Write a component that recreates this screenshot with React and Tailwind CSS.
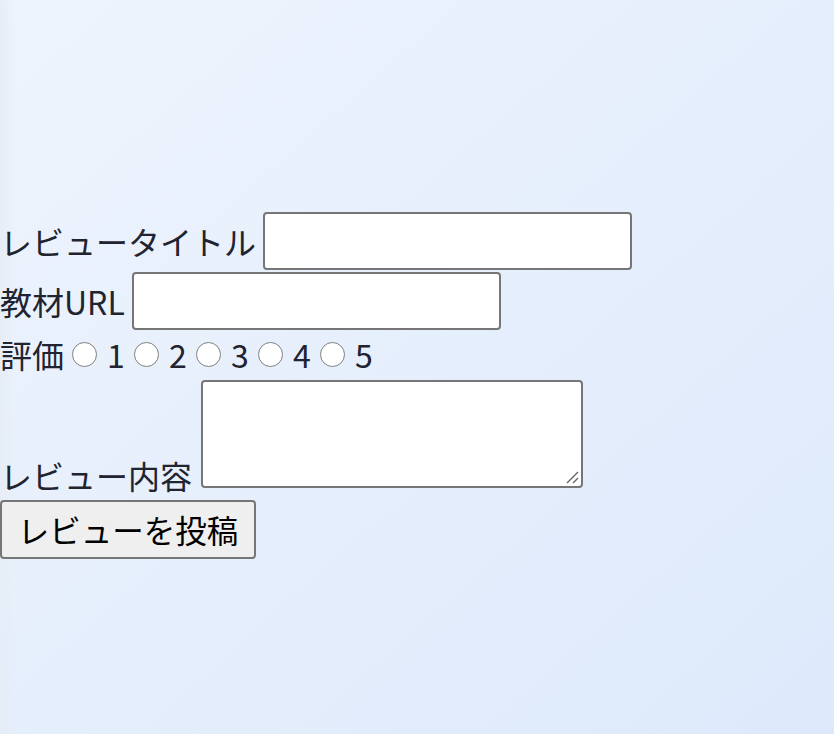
import React from "react";

function Radio() {
  return (
    <span className="inline-block w-[25px] h-[25px] rounded-full border-[1.5px] border-[#808080] bg-white shrink-0" />
  );
}

export default function App() {
  const nums = ["1", "2", "3", "4", "5"];
  return (
    <div className="min-h-[734px] w-full bg-linear-to-br from-[#eef4fd] to-[#dde9fb] text-[32px] text-[#1f2430] font-['Noto_Sans_CJK_JP','Noto_Sans',sans-serif] overflow-hidden relative">
      <div className="absolute left-0 top-0 h-full w-[16px] bg-linear-to-r from-[#e6edf7] to-transparent" />
      <div className="relative pt-[212px] flex flex-col">
        <div className="flex items-center h-[58px]">
          <span className="leading-none">レビュータイトル</span>
          <span className="ml-[7px] w-[369px] h-[58px] rounded-[4px] border-2 border-[#767676] bg-white" />
        </div>
        <div className="flex items-center h-[58px] mt-[2px]">
          <span className="leading-none">教材URL</span>
          <span className="ml-[7px] w-[369px] h-[58px] rounded-[4px] border-2 border-[#767676] bg-white" />
        </div>
        <div className="flex items-center h-[48px]">
          <span className="leading-none">評価</span>
          {nums.map((n, i) => (
            <React.Fragment key={n}>
              <span className={i === 0 ? "ml-[8px] flex" : "ml-[9px] flex"}>
                <Radio />
              </span>
              <span className="ml-[10px] leading-none w-[18px]">{n}</span>
            </React.Fragment>
          ))}
        </div>
        <div className="flex items-end mt-[2px]">
          <span className="leading-none mb-[-3px]">レビュー内容</span>
          <span className="ml-[9px] w-[382px] h-[108px] rounded-[4px] border-2 border-[#767676] bg-white relative">
            <svg className="absolute right-[2px] bottom-[2px]" width="14" height="14" viewBox="0 0 14 14">
              <line x1="2" y1="13" x2="13" y2="2" stroke="#6b6b6b" strokeWidth="1.5" />
              <line x1="8" y1="13" x2="13" y2="8" stroke="#6b6b6b" strokeWidth="1.5" />
            </svg>
          </span>
        </div>
        <div className="mt-[12px]">
          <button className="w-[256px] h-[59px] rounded-[4px] border-2 border-[#767676] bg-[#efefef] text-black text-[31.5px] leading-none flex items-center justify-center">
            レビューを投稿
          </button>
        </div>
      </div>
    </div>
  );
}
